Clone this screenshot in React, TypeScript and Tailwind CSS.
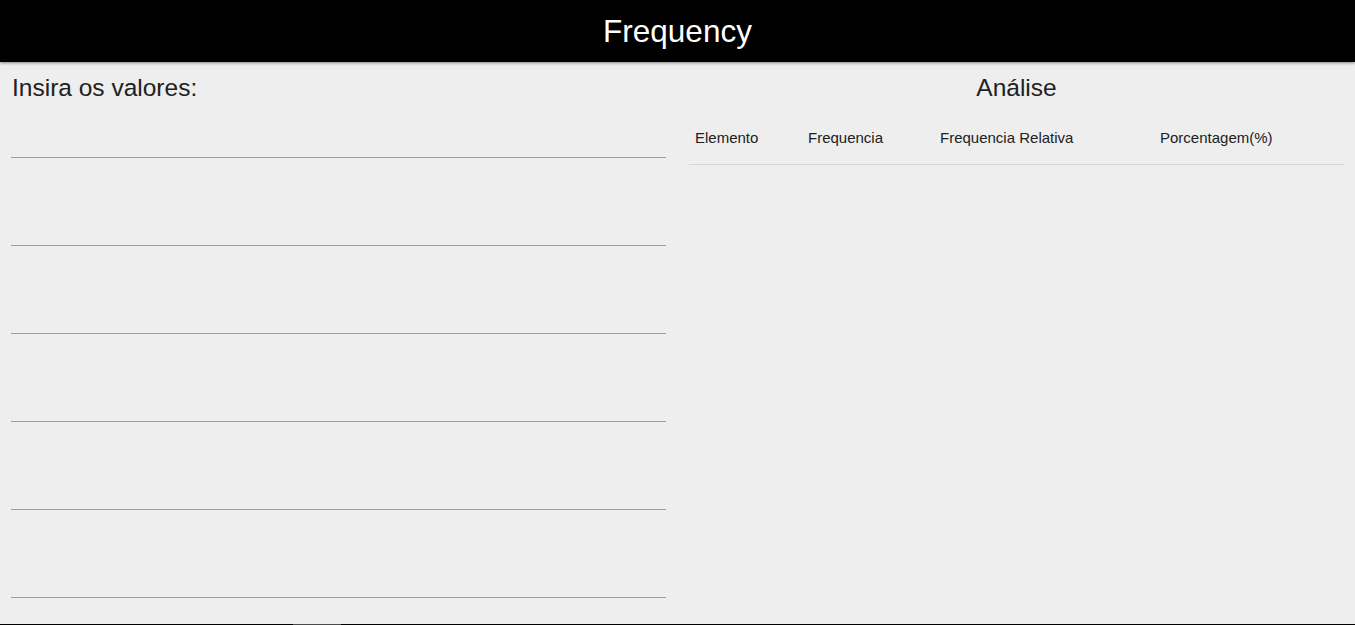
import React from "react";

export default function App() {
  const font = { fontFamily: '"Liberation Sans", Arial, sans-serif' };
  return (
    <div className="w-[1355px] h-[625px] bg-[#eeeeee] flex flex-col overflow-hidden" style={font}>
      <header className="h-[62px] shrink-0 bg-black flex items-center justify-center shadow-[0_1px_3px_rgba(0,0,0,0.45)] relative z-10">
        <h1 className="text-white text-[31.5px] leading-none pt-[1px]">Frequency</h1>
      </header>
      <main className="h-[562px] shrink-0 flex gap-[23px] px-[11px] pt-[12px]">
        <section className="w-[655px] flex flex-col">
          <h2 className="text-[24.5px] leading-[28px] text-[#212121] pl-[1px]">Insira os valores:</h2>
          <div className="mt-[15px] flex flex-col gap-[47px]">
            {[0, 1, 2, 3, 4, 5].map((i) => (
              <input
                key={i}
                className="h-[41px] w-full bg-transparent border-0 border-b border-[#9e9e9e] outline-none"
              />
            ))}
          </div>
        </section>
        <section className="w-[655px] flex flex-col">
          <h2 className="text-[24.5px] leading-[28px] text-[#212121] text-center">Análise</h2>
          <div className="mt-[15px] h-[48px] border-b border-[#d6d6d6] grid grid-cols-[113px_132px_220px_190px] pl-[6px] pt-[12px] text-[15px] leading-[17px] text-[#212121]">
            <div>Elemento</div>
            <div>Frequencia</div>
            <div>Frequencia Relativa</div>
            <div>Porcentagem(%)</div>
          </div>
        </section>
      </main>
      <div className="h-[1px] shrink-0 flex bg-black">
        <div className="w-[293px]" />
        <div className="w-[48px] bg-[#4a4a4a]" />
      </div>
    </div>
  );
}
